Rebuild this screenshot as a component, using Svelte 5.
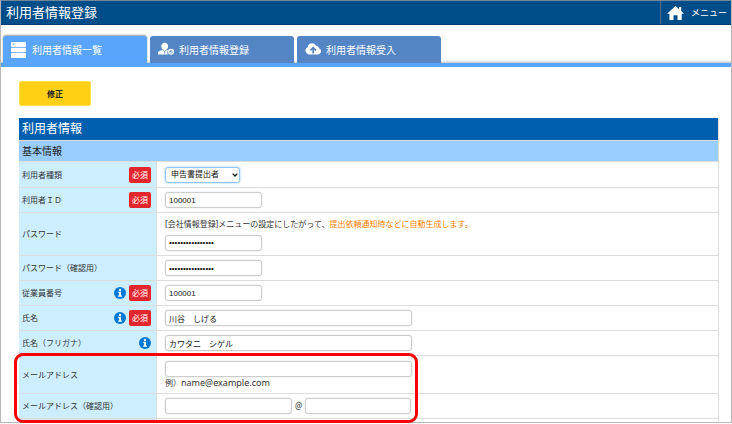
<script>
  const tabs = [
    { label: '利用者情報一覧', icon: 'list', active: true },
    { label: '利用者情報登録', icon: 'user', active: false },
    { label: '利用者情報受入', icon: 'cloud', active: false }
  ];

  let userType = $state('申告書提出者');
  let userId = $state('100001');
  let password = $state('abcdefgh12345678');
  let passwordConfirm = $state('abcdefgh12345678');
  let employeeNo = $state('100001');
  let fullName = $state('川谷　しげる');
  let kana = $state('カワタニ　シゲル');
  let mail = $state('');
  let mailUser = $state('');
  let mailDomain = $state('');
</script>

{#snippet info()}
  <svg class="info" viewBox="0 0 12 12" aria-hidden="true">
    <circle cx="6" cy="6" r="6" fill="#0078d7" />
    <circle cx="6" cy="2.9" r="1.2" fill="#fff" />
    <path d="M4.300 4.700h2.700v3.800h.9v1.200H4.200V8.500h.9V5.900h-.8z" fill="#fff" />
  </svg>
{/snippet}

{#snippet heading(id, text, hasInfo, required)}
  <th scope="row">
    <div class="head">
      <label for={id}>{text}</label>
      {#if hasInfo}{@render info()}{/if}
      {#if required}<span class="badge">必須</span>{/if}
    </div>
  </th>
{/snippet}

<div class="frame">
  <header>
    <h1>利用者情報登録</h1>
    <a class="menu" href="#menu">
      <svg viewBox="0 0 17 14" aria-hidden="true">
        <path d="M8.5 0 12 3.2V1h2.200v4.100L17 7.700h-2.300V14h-4.200V9.300h-4V14H2.400V7.700H0z" fill="#fff" />
      </svg>
      メニュー
    </a>
  </header>

  <nav>
    {#each tabs as tab}
      <a href="#{tab.icon}" class="tab" class:active={tab.active}>
        <svg viewBox="0 0 16 16" aria-hidden="true">
          {#if tab.icon === 'list'}
            <rect width="15" height="5" rx="1" fill="#fff" />
            <rect y="5.7" width="15" height="4.600" rx="1" fill="#fff" />
            <rect y="11" width="15" height="5" rx="1" fill="#fff" />
            <circle cx="2.6" cy="2.2" r=".8" fill="#58a5fb" />
          {:else if tab.icon === 'user'}
            <path d="M3.3 4.200C3.300 2.100 4.700.8 6.700.8s3.400 1.300 3.400 3.400c0 1.500-.8 3-1.900 3.700l1.900.7c-1 1.100-1 2.900-.2 4H0v-1.900c0-1.200 1-1.700 2-2l3.200-.9C4.100 7.100 3.300 5.700 3.300 4.200z" fill="#fff" />
            <path d="m5.200 8 1.500 1.300L8.200 8M6.700 9.300v3" fill="none" stroke="#5485c5" stroke-width=".7" />
            <circle cx="13" cy="9.8" r="2.3" fill="none" stroke="#fff" stroke-width="1.3" />
            <path d="m11.800 9.800 1 1 2.800-3" fill="none" stroke="#fff" />
          {:else}
            <path d="M3.800 12.500A3.800 3.800 0 0 1 2.700 5.300C2.900 2.800 4.900 1.300 7 1.300c1.900 0 3.500 1 4.200 2.600 1.700-.2 2.800.9 2.700 2.300C15.200 6.500 16 7.700 16 9c0 2-1.500 3.500-3.400 3.500z" fill="#fff" />
            <path d="M8.200 11.500V6.100M5.400 8.300l2.800-2.700L11 8.300" fill="none" stroke="#5485c5" stroke-width="1.7" />
          {/if}
        </svg>
        {tab.label}
      </a>
    {/each}
  </nav>

  <main>
    <button type="button" class="edit">修正</button>

    <table>
      <thead>
        <tr><th colspan="2" class="title">利用者情報</th></tr>
        <tr><th colspan="2" class="section">基本情報</th></tr>
      </thead>
      <tbody>
        <tr class="first">
          {@render heading('user-type', '利用者種類', false, true)}
          <td>
            <div class="select">
              <select id="user-type" bind:value={userType}>
                <option>申告書提出者</option>
                <option>管理者</option>
              </select>
              <svg viewBox="0 0 6 4" aria-hidden="true">
                <path d="m.6.6 2.400 2.400L5.400.6" fill="none" stroke="#111" stroke-width="1.3" />
              </svg>
            </div>
          </td>
        </tr>
        <tr>
          {@render heading('user-id', '利用者ＩＤ', false, true)}
          <td><input id="user-id" class="short" type="text" bind:value={userId} /></td>
        </tr>
        <tr class="tall">
          {@render heading('password', 'パスワード', false, false)}
          <td>
            <p>[会社情報登録]メニューの設定にしたがって、<em>提出依頼通知時などに自動生成します。</em></p>
            <input id="password" class="short" type="password" bind:value={password} />
          </td>
        </tr>
        <tr>
          {@render heading('password-confirm', 'パスワード（確認用）', false, false)}
          <td><input id="password-confirm" class="short" type="password" bind:value={passwordConfirm} /></td>
        </tr>
        <tr>
          {@render heading('employee-no', '従業員番号', true, true)}
          <td><input id="employee-no" class="short" type="text" bind:value={employeeNo} /></td>
        </tr>
        <tr>
          {@render heading('full-name', '氏名', true, true)}
          <td><input id="full-name" class="long" type="text" bind:value={fullName} /></td>
        </tr>
        <tr>
          {@render heading('kana', '氏名（フリガナ）', true, false)}
          <td><input id="kana" class="long" type="text" bind:value={kana} /></td>
        </tr>
      </tbody>
      <tbody class="marked">
        <tr class="mail">
          {@render heading('mail', 'メールアドレス', false, false)}
          <td>
            <input id="mail" class="long" type="email" bind:value={mail} />
            <p class="example">例）<span>name@example.com</span></p>
          </td>
        </tr>
        <tr>
          {@render heading('mail-user', 'メールアドレス（確認用）', false, false)}
          <td>
            <div class="split">
              <input id="mail-user" class="local" type="text" bind:value={mailUser} />
              @
              <input class="domain" type="text" aria-label="ドメイン" bind:value={mailDomain} />
            </div>
          </td>
        </tr>
      </tbody>
      <tbody>
        <tr><th></th><td></td></tr>
      </tbody>
    </table>
  </main>
</div>

<style>
  :global(body) {
    background: #fff;
  }

  .frame,
  .frame * {
    box-sizing: border-box;
  }

  .frame {
    position: relative;
    height: calc(100vh - 1px);
    overflow: hidden;
    padding: 1px 1px 0;
    color: #333;
    font: 8px/12px 'Noto Sans', 'Noto Sans CJK JP', sans-serif;
  }

  .frame::after {
    content: '';
    position: absolute;
    inset: 0;
    border: 1px solid #b8b8b8;
    border-top-color: #6f8799;
    pointer-events: none;
    z-index: 1;
  }

  header {
    display: flex;
    justify-content: space-between;
    height: 24px;
    background: #004e89;
    border-bottom: 1px solid #003b73;
    color: #fff;
  }

  h1 {
    margin: 0;
    padding-left: 5px;
    font-size: 13px;
    font-weight: 400;
    line-height: 22px;
  }

  .menu {
    display: flex;
    align-items: center;
    gap: 7px;
    padding: 0 4px 0 6px;
    border-left: 1px solid #4d7189;
    color: #fff;
    font-size: 9px;
    text-decoration: none;
  }

  .menu svg {
    width: 17px;
    height: 14px;
  }

  nav {
    display: flex;
    gap: 3px;
    padding: 11px 2px 0;
    border-bottom: 4px solid #58a5fb;
    background: linear-gradient(to top, #ccc, #fff 3px);
  }

  .tab {
    display: flex;
    align-items: center;
    gap: 5px;
    width: 144px;
    height: 27px;
    padding-left: 8px;
    border-radius: 3px 3px 0 0;
    background: #5485c5;
    color: #fff;
    font-size: 10px;
    text-decoration: none;
  }

  .tab.active {
    background: #58a5fb;
    box-shadow: 0 -1px 2px #999;
  }

  .tab svg {
    width: 16px;
    height: 16px;
  }

  main {
    padding: 14px 12px 0 18px;
  }

  .edit {
    display: block;
    width: 72px;
    height: 25px;
    margin-bottom: 12px;
    padding: 0;
    border: 1px solid #ffdf50;
    border-radius: 2px;
    background: #ffd014;
    color: #222;
    font: bold 8px/12px 'Noto Sans', 'Noto Sans CJK JP', sans-serif;
  }

  table {
    width: 100%;
    border-spacing: 0;
    border-right: 1px solid #ddd;
  }

  th,
  td {
    height: 25px;
    padding: 0 8px;
    border-bottom: 1px solid #ddd;
    vertical-align: middle;
  }

  th {
    width: 138px;
    padding: 0 5px 0 3px;
    border-right: 1px solid #d5dce0;
    background: #cceeff;
    font-weight: 400;
    text-align: left;
  }

  .title,
  .section {
    height: 23px;
    border-right: 0;
    background: #0060af;
    color: #fff;
    font-size: 12px;
    line-height: 20px;
  }

  .section {
    height: 21px;
    background: #99ccff;
    color: #222;
    font-size: 10px;
    line-height: 16px;
  }

  .first th {
    height: 26px;
  }

  .tall th {
    height: 43px;
  }

  .mail th {
    height: 38px;
  }

  .head {
    display: flex;
    align-items: center;
    gap: 3px;
  }

  .head label {
    flex: 1;
  }

  .info {
    width: 12px;
    height: 12px;
  }

  .badge {
    width: 22px;
    border-radius: 2px;
    background: #e3262d;
    color: #fff;
    line-height: 16px;
    text-align: center;
  }

  p {
    margin: 0 0 5px;
  }

  em {
    color: #ff8000;
    font-style: normal;
  }

  input,
  select {
    display: block;
    height: 16px;
    margin: 0;
    padding: 0 3px;
    border: 1px solid #ccc;
    border-radius: 3px;
    background: #fff;
    box-shadow: 0 0 2px #ddd;
    color: #111;
    font: 8px/12px 'Liberation Sans', 'Noto Sans CJK JP', sans-serif;
  }

  .short {
    width: 97px;
  }

  .long {
    width: 247px;
  }

  .local {
    width: 127px;
  }

  .domain {
    width: 106px;
  }

  .select {
    position: relative;
    width: 75px;
  }

  select {
    width: 100%;
    padding: 0 5px;
    border-color: #8fc4f5;
    box-shadow: 0 0 3px #9fd0ff;
    appearance: none;
  }

  .select svg {
    position: absolute;
    top: 6px;
    right: 2px;
    width: 6px;
    height: 4px;
    pointer-events: none;
  }

  .example {
    margin: 0;
  }

  .example span {
    font-size: 9px;
  }

  .split {
    display: flex;
    align-items: center;
    gap: 3px;
  }

  .marked {
    position: relative;
  }

  .marked::after {
    content: '';
    position: absolute;
    inset: -3px auto -4px -5px;
    box-sizing: border-box;
    width: 404px;
    border: 3px solid #fb0006;
    border-radius: 9px;
    pointer-events: none;
    z-index: 2;
  }
</style>
